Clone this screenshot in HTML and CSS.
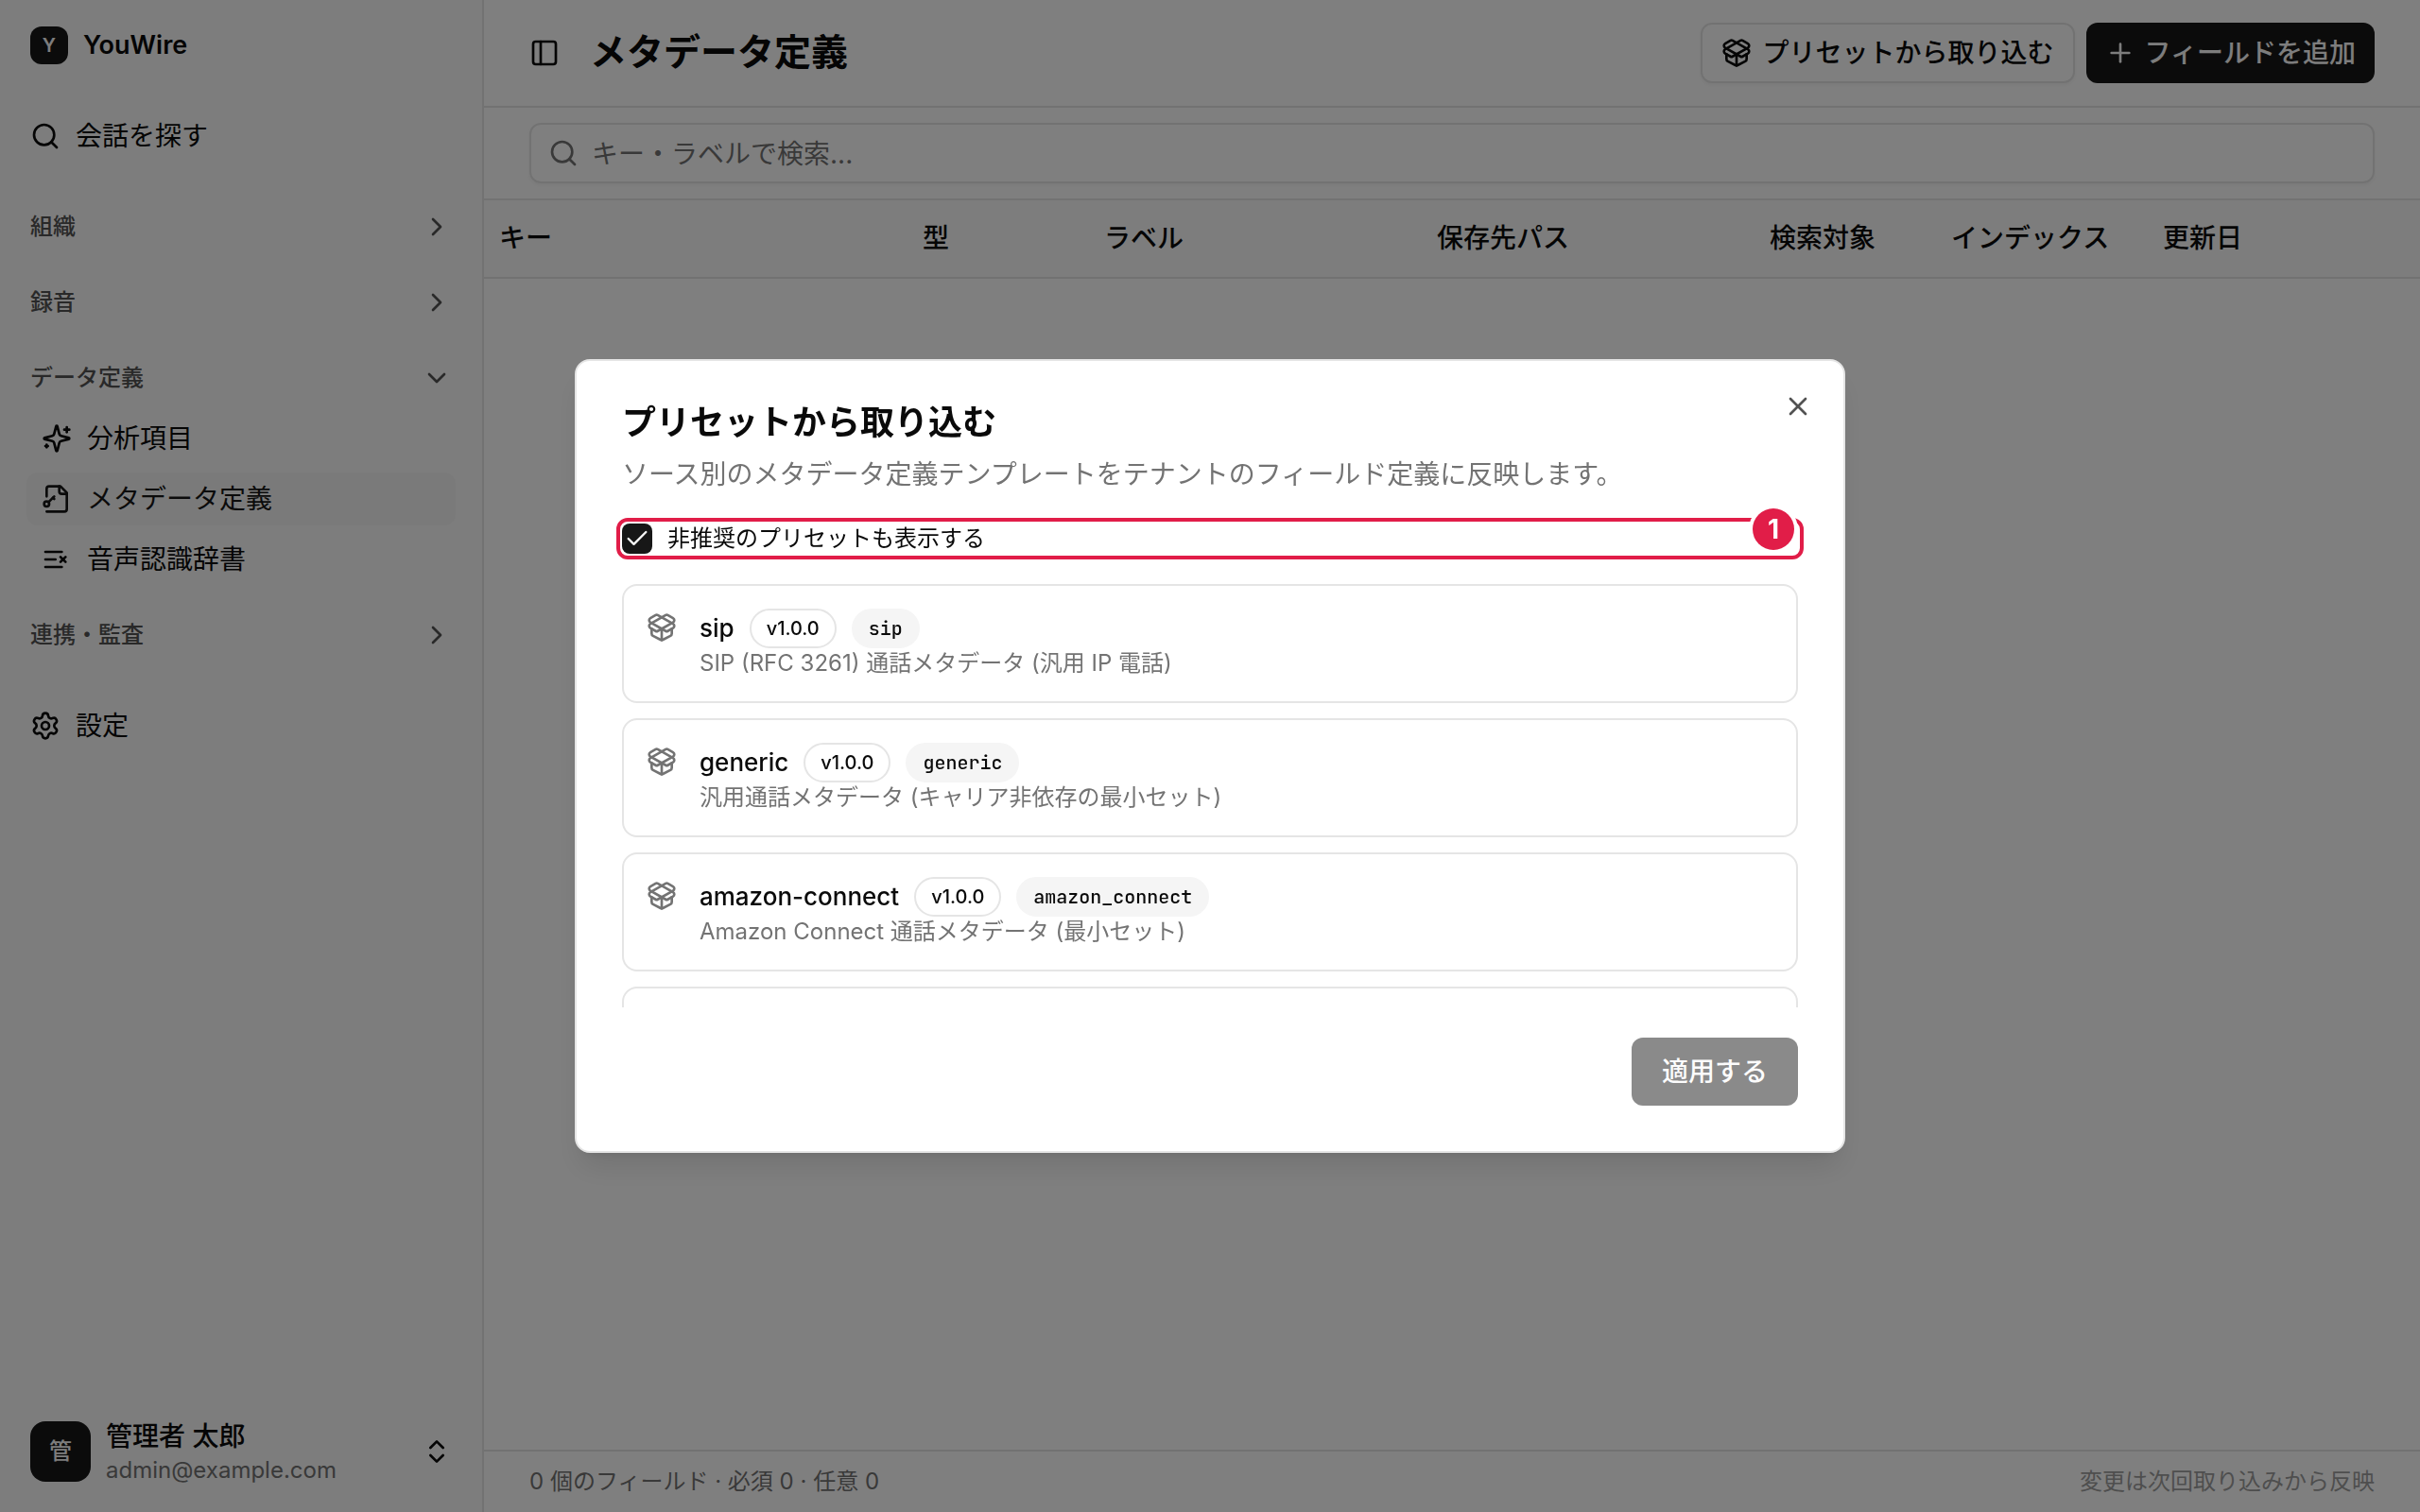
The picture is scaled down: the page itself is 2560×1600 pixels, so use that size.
FILE: index.html
```html
<!DOCTYPE html>
<html lang="ja">
<head>
<meta charset="utf-8">
<title>メタデータ定義</title>
<link rel="stylesheet" href="styles.css">
</head>
<body>
<svg class="defs" aria-hidden="true">
  <symbol id="i-search" viewBox="0 0 24 24"><path d="m21 21-4.34-4.34"/><circle cx="11" cy="11" r="8"/></symbol>
  <symbol id="i-right" viewBox="0 0 24 24"><path d="m9 18 6-6-6-6"/></symbol>
  <symbol id="i-down" viewBox="0 0 24 24"><path d="m6 9 6 6 6-6"/></symbol>
  <symbol id="i-updown" viewBox="0 0 24 24"><path d="m7 15 5 5 5-5"/><path d="m7 9 5-5 5 5"/></symbol>
  <symbol id="i-plus" viewBox="0 0 24 24"><path d="M5 12h14"/><path d="M12 5v14"/></symbol>
  <symbol id="i-x" viewBox="0 0 24 24"><path d="M18 6 6 18"/><path d="m6 6 12 12"/></symbol>
  <symbol id="i-check" viewBox="0 0 24 24"><path d="M20 6 9 17l-5-5"/></symbol>
  <symbol id="i-panel" viewBox="0 0 24 24"><rect width="18" height="18" x="3" y="3" rx="2"/><path d="M9 3v18"/></symbol>
  <symbol id="i-sparkles" viewBox="0 0 24 24"><path d="M9.937 15.5A2 2 0 0 0 8.5 14.063l-6.135-1.582a.5.5 0 0 1 0-.962L8.5 9.936A2 2 0 0 0 9.937 8.5l1.582-6.135a.5.5 0 0 1 .963 0L14.063 8.5A2 2 0 0 0 15.5 9.937l6.135 1.581a.5.5 0 0 1 0 .964L15.5 14.063a2 2 0 0 0-1.437 1.437l-1.582 6.135a.5.5 0 0 1-.963 0z"/><path d="M20 3v4"/><path d="M22 5h-4"/><path d="M4 17v2"/><path d="M5 18H3"/></symbol>
  <symbol id="i-filekey" viewBox="0 0 24 24"><path d="M4 10V4a2 2 0 0 1 2-2h9l5 5v13a2 2 0 0 1-2 2H4"/><path d="M14 2v4a2 2 0 0 0 2 2h4"/><circle cx="4" cy="16" r="2"/><path d="m10 10-4.5 4.5"/><path d="m9 11 1 1"/></symbol>
  <symbol id="i-listx" viewBox="0 0 24 24"><path d="M11 12H3"/><path d="M16 6H3"/><path d="M16 18H3"/><path d="m19 10-4 4"/><path d="m15 10 4 4"/></symbol>
  <symbol id="i-settings" viewBox="0 0 24 24"><path d="M9.671 4.136a2.34 2.34 0 0 1 4.659 0 2.34 2.34 0 0 0 3.319 1.915 2.34 2.34 0 0 1 2.33 4.033 2.34 2.34 0 0 0 0 3.831 2.34 2.34 0 0 1-2.33 4.033 2.34 2.34 0 0 0-3.319 1.915 2.34 2.34 0 0 1-4.659 0 2.34 2.34 0 0 0-3.32-1.915 2.34 2.34 0 0 1-2.33-4.033 2.34 2.34 0 0 0 0-3.831A2.34 2.34 0 0 1 6.35 6.051a2.34 2.34 0 0 0 3.319-1.915"/><circle cx="12" cy="12" r="3"/></symbol>
  <symbol id="i-package" viewBox="0 0 24 24"><path d="M12 22v-9"/><path d="M15.17 2.21a1.67 1.67 0 0 1 1.63 0L21 4.57a1.93 1.93 0 0 1 0 3.36L8.82 14.79a1.655 1.655 0 0 1-1.64 0L3 12.43a1.93 1.93 0 0 1 0-3.36z"/><path d="M20 13v3.87a2.06 2.06 0 0 1-1.11 1.83l-6 3.08a1.93 1.93 0 0 1-1.78 0l-6-3.08A2.06 2.06 0 0 1 4 16.87V13"/><path d="M21 12.43a1.93 1.93 0 0 0 0-3.36L8.83 2.2a1.64 1.64 0 0 0-1.63 0L3 4.57a1.93 1.93 0 0 0 0 3.36l12.18 6.86a1.636 1.636 0 0 0 1.63 0z"/></symbol>
</svg>

<div class="app">
  <aside class="sidebar">
    <div class="brand"><span class="brand-mark">Y</span><span class="brand-name">YouWire</span></div>
    <nav class="nav">
      <a class="nav-top" href="#"><svg class="icon"><use href="#i-search"/></svg>会話を探す</a>
      <div class="groups">
        <button class="group" type="button">組織<svg class="icon"><use href="#i-right"/></svg></button>
        <button class="group" type="button">録音<svg class="icon"><use href="#i-right"/></svg></button>
        <div>
          <button class="group" type="button">データ定義<svg class="icon"><use href="#i-down"/></svg></button>
          <div class="items">
            <a class="item" href="#"><svg class="icon"><use href="#i-sparkles"/></svg>分析項目</a>
            <a class="item active" href="#"><svg class="icon"><use href="#i-filekey"/></svg>メタデータ定義</a>
            <a class="item" href="#"><svg class="icon"><use href="#i-listx"/></svg>音声認識辞書</a>
          </div>
        </div>
        <button class="group" type="button">連携・監査<svg class="icon"><use href="#i-right"/></svg></button>
      </div>
      <a class="nav-top" href="#"><svg class="icon"><use href="#i-settings"/></svg>設定</a>
    </nav>
    <button class="user" type="button">
      <span class="avatar">管</span>
      <span class="user-text"><span class="user-name">管理者 太郎</span><span class="user-mail">admin@example.com</span></span>
      <svg class="icon"><use href="#i-updown"/></svg>
    </button>
  </aside>

  <main class="main">
    <header class="topbar">
      <button class="plain" type="button"><svg class="icon"><use href="#i-panel"/></svg></button>
      <h1 class="page-title">メタデータ定義</h1>
      <div class="actions">
        <button class="btn outline" type="button"><svg class="icon"><use href="#i-package"/></svg>プリセットから取り込む</button>
        <button class="btn primary add" type="button"><svg class="icon"><use href="#i-plus"/></svg>フィールドを追加</button>
      </div>
    </header>
    <div class="toolbar">
      <label class="search"><svg class="icon"><use href="#i-search"/></svg><input class="search-input" type="text" placeholder="キー・ラベルで検索..."></label>
    </div>
    <table class="fields">
      <colgroup><col class="c-key"><col class="c-small"><col class="c-wide"><col class="c-wide"><col class="c-small"><col class="c-index"><col></colgroup>
      <thead><tr><th>キー</th><th>型</th><th>ラベル</th><th>保存先パス</th><th>検索対象</th><th>インデックス</th><th>更新日</th></tr></thead>
    </table>
    <footer class="status"><span>0 個のフィールド · 必須 0 · 任意 0</span><span class="status-note">変更は次回取り込みから反映</span></footer>
  </main>
</div>

<div class="overlay">
  <section class="dialog" role="dialog" aria-labelledby="dlg-title">
    <button class="plain close" type="button"><svg class="icon"><use href="#i-x"/></svg></button>
    <div class="dialog-head">
      <h2 class="dialog-title" id="dlg-title">プリセットから取り込む</h2>
      <p class="dialog-desc">ソース別のメタデータ定義テンプレートをテナントのフィールド定義に反映します。</p>
    </div>
    <div class="option">
      <span class="check"><input class="check-input" type="checkbox" id="deprecated" checked><svg class="icon check-icon"><use href="#i-check"/></svg></span>
      <label for="deprecated">非推奨のプリセットも表示する</label>
      <span class="callout"><span class="callout-num">1</span></span>
    </div>
    <ul class="presets">
      <li class="preset">
        <svg class="icon"><use href="#i-package"/></svg>
        <div>
          <div class="preset-row"><span class="preset-name">sip</span><span class="pill">v1.0.0</span><span class="pill code">sip</span></div>
          <p class="preset-desc">SIP (RFC 3261) 通話メタデータ (汎用 IP 電話)</p>
        </div>
      </li>
      <li class="preset">
        <svg class="icon"><use href="#i-package"/></svg>
        <div>
          <div class="preset-row"><span class="preset-name">generic</span><span class="pill">v1.0.0</span><span class="pill code">generic</span></div>
          <p class="preset-desc">汎用通話メタデータ (キャリア非依存の最小セット)</p>
        </div>
      </li>
      <li class="preset">
        <svg class="icon"><use href="#i-package"/></svg>
        <div>
          <div class="preset-row"><span class="preset-name">amazon-connect</span><span class="pill">v1.0.0</span><span class="pill code">amazon_connect</span></div>
          <p class="preset-desc">Amazon Connect 通話メタデータ (最小セット)</p>
        </div>
      </li>
      <li class="preset"></li>
    </ul>
    <div class="dialog-foot"><button class="btn primary large" type="button" disabled>適用する</button></div>
  </section>
</div>
</body>
</html>
```
FILE: styles.css
```css
:root {
  --fg: #0a0a0a;
  --muted: #737373;
  --border: #e5e5e5;
  --primary: #171717;
  --accent: #e11d48;
}

* { box-sizing: border-box; }

body {
  margin: 0;
  font-family: Inter, "Noto Sans CJK JP", sans-serif;
  font-size: 28px;
  line-height: 40px;
  color: var(--fg);
  background: #fff;
}

button, input {
  font: inherit;
  color: inherit;
}

button {
  border: 0;
  padding: 0;
  background: none;
  text-align: left;
}

a { color: inherit; text-decoration: none; }
h1, h2, p, ul { margin: 0; padding: 0; }
ul { list-style: none; }

.defs { display: none; }

.icon {
  flex: none;
  display: block;
  width: 32px;
  height: 32px;
  fill: none;
  stroke: currentColor;
  stroke-width: 2;
  stroke-linecap: round;
  stroke-linejoin: round;
}

.app {
  display: grid;
  grid-template-columns: 512px 1fr;
  min-height: 100vh;
}

/* Sidebar */
.sidebar {
  display: flex;
  flex-direction: column;
  background: #fafafa;
  border-right: 2px solid var(--border);
}

.brand {
  display: flex;
  align-items: center;
  gap: 16px;
  padding: 28px 32px;
}

.brand-mark {
  display: grid;
  place-items: center;
  width: 40px;
  height: 40px;
  border-radius: 12px;
  background: var(--primary);
  color: #fafafa;
  font-size: 20px;
  font-weight: 600;
}

.brand-name { font-size: 27px; font-weight: 600; }

.nav {
  flex: 1;
  display: flex;
  flex-direction: column;
  gap: 36px;
  padding: 20px 28px;
}

.nav-top {
  display: flex;
  align-items: center;
  gap: 16px;
  height: 56px;
  padding: 0 4px;
}

.groups {
  display: flex;
  flex-direction: column;
  gap: 16px;
}

.group {
  display: flex;
  align-items: center;
  justify-content: space-between;
  width: 100%;
  height: 64px;
  padding: 0 4px;
  font-size: 24px;
  font-weight: 500;
  color: #525252;
}

.items {
  display: flex;
  flex-direction: column;
  gap: 8px;
  padding: 4px 0;
}

.item {
  display: flex;
  align-items: center;
  gap: 16px;
  height: 56px;
  padding: 0 16px;
  border-radius: 12px;
}

.active { background: #f5f5f5; color: var(--primary); }

.user {
  display: flex;
  align-items: center;
  gap: 16px;
  padding: 28px 32px;
}

.avatar {
  display: grid;
  place-items: center;
  width: 64px;
  height: 64px;
  border-radius: 16px;
  background: var(--primary);
  color: #fafafa;
  font-size: 24px;
  font-weight: 500;
}

.user-text {
  flex: 1;
  display: flex;
  flex-direction: column;
}

.user-name { font-weight: 500; }
.user-mail { font-size: 24px; line-height: 32px; color: var(--muted); }

/* Main column */
.main {
  display: flex;
  flex-direction: column;
}

.topbar {
  display: flex;
  align-items: center;
  gap: 32px;
  padding: 24px 48px;
  border-bottom: 2px solid var(--border);
}

.page-title {
  flex: 1;
  padding-bottom: 2px;
  font-size: 39px;
  line-height: 48px;
  font-weight: 600;
}

.actions { display: flex; gap: 12px; }

.btn {
  display: flex;
  align-items: center;
  gap: 12px;
  height: 64px;
  padding: 0 20px;
  border-radius: 12px;
  font-weight: 500;
}

.outline {
  border: 2px solid var(--border);
  background: #fff;
  box-shadow: 0 2px 4px rgba(0, 0, 0, 0.05);
}

.primary { background: var(--primary); color: #fafafa; }
.primary:disabled { opacity: 0.5; }
.add { gap: 10px; }
.large { height: 72px; padding: 0 32px; }

.toolbar {
  padding: 16px 48px;
  border-bottom: 2px solid var(--border);
}

.search {
  display: flex;
  align-items: center;
  gap: 14px;
  height: 64px;
  padding: 0 18px;
  border: 2px solid var(--border);
  border-radius: 12px;
  color: var(--muted);
  box-shadow: 0 2px 4px rgba(0, 0, 0, 0.05);
}

.search-input {
  flex: 1;
  padding: 2px 0 0;
  border: 0;
  outline: 0;
  background: none;
}

.search-input::placeholder { color: var(--muted); opacity: 1; }

.fields {
  width: 100%;
  table-layout: fixed;
  border-collapse: collapse;
}

.fields tr { background: #fafafa; border-bottom: 2px solid var(--border); }
.fields th { height: 82px; padding: 0 16px 2px; text-align: left; font-weight: 500; }
.c-key { width: 448px; }
.c-small { width: 192px; }
.c-wide { width: 352px; }
.c-index { width: 224px; }

.status {
  display: flex;
  justify-content: space-between;
  margin-top: auto;
  padding: 16px 48px;
  border-top: 2px solid var(--border);
  font-size: 24px;
  line-height: 32px;
  color: var(--muted);
}

.status-note { opacity: 0.7; }

/* Dialog */
.overlay {
  position: fixed;
  inset: 0;
  display: grid;
  place-items: center;
  background: rgba(0, 0, 0, 0.5);
}

.dialog {
  position: relative;
  display: flex;
  flex-direction: column;
  gap: 32px;
  width: 100%;
  max-width: 1344px;
  padding: 48px;
  border: 2px solid var(--border);
  border-radius: 16px;
  background: #fff;
  box-shadow: 0 20px 30px -6px rgba(0, 0, 0, 0.1), 0 8px 12px -8px rgba(0, 0, 0, 0.1);
}

.close {
  position: absolute;
  top: 32px;
  right: 32px;
  opacity: 0.7;
}

.dialog-head {
  display: flex;
  flex-direction: column;
  gap: 18px;
}

.dialog-title { font-size: 36px; line-height: 34px; font-weight: 600; }
.dialog-desc { color: var(--muted); }

.option {
  position: relative;
  display: flex;
  align-items: center;
  gap: 16px;
  font-size: 24px;
  line-height: 32px;
}

.check { display: grid; place-items: center; }
.check > * { grid-area: 1 / 1; }

.check-input {
  appearance: none;
  width: 32px;
  height: 32px;
  margin: 0;
  border-radius: 8px;
  background: var(--primary);
}

.check-icon { width: 28px; height: 28px; color: #fafafa; pointer-events: none; }

.callout {
  position: absolute;
  inset: -6px;
  border: 4px solid var(--accent);
  border-radius: 12px;
  pointer-events: none;
}

.callout-num {
  position: absolute;
  top: -14px;
  right: 6px;
  display: grid;
  place-items: center;
  width: 44px;
  height: 44px;
  border-radius: 50%;
  background: var(--accent);
  box-shadow: 0 0 0 4px #fff;
  color: #fff;
  font-size: 28px;
  font-weight: 700;
}

.presets {
  display: flex;
  flex-direction: column;
  gap: 16px;
  height: 448px;
  overflow: hidden;
}

.preset {
  flex: none;
  display: flex;
  gap: 24px;
  min-height: 126px;
  padding: 24px;
  border: 2px solid var(--border);
  border-radius: 16px;
}

.preset > .icon { margin-top: 4px; color: var(--muted); }

.preset-row { display: flex; align-items: center; gap: 16px; }
.preset-name { font-size: 26px; font-weight: 500; }

.pill {
  padding: 4px 16px;
  border: 2px solid var(--border);
  border-radius: 21px;
  font-size: 20px;
  line-height: 30px;
  font-weight: 500;
}

.code {
  border-color: #f5f5f5;
  background: #f5f5f5;
  font-family: "JetBrains Mono", "DejaVu Sans Mono", monospace;
}

.preset-desc { font-size: 24px; line-height: 32px; color: var(--muted); }

.dialog-foot { display: flex; justify-content: flex-end; }
```
